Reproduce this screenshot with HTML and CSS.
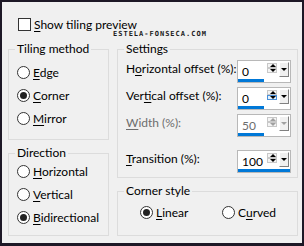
FILE: index.html
```html
<!DOCTYPE html>
<html lang="en">
<head>
    <meta charset="UTF-8">
    <title>Tiling</title>
    <link rel="stylesheet" href="styles.css">
</head>
<body>

<div class="dialog">
    <!-- Preview toggle -->
    <label class="check"><span class="box"></span><span><u>S</u>how tiling preview</span></label>
    <div class="watermark">ESTELA-FONSECA.COM</div>

    <div class="panes">
        <div class="col">
            <fieldset class="group tiling">
                <legend>Tiling method</legend>
                <div class="options">
                    <div class="radio"><span class="circle"></span><span><u>E</u>dge</span></div>
                    <div class="radio"><span class="circle on"></span><span><u>C</u>orner</span></div>
                    <div class="radio"><span class="circle"></span><span><u>M</u>irror</span></div>
                </div>
            </fieldset>

            <fieldset class="group direction">
                <legend>Direction</legend>
                <div class="options">
                    <div class="radio"><span class="circle"></span><span><u>H</u>orizontal</span></div>
                    <div class="radio"><span class="circle"></span><span><u>V</u>ertical</span></div>
                    <div class="radio"><span class="circle on"></span><span><u>B</u>idirectional</span></div>
                </div>
            </fieldset>
        </div>

        <div class="col">
            <fieldset class="group settings">
                <legend>Settings</legend>
                <div class="field">
                    <span class="label">H<u>o</u>rizontal offset (%):</span>
                    <div class="spin"><span class="value">0</span><span class="arrows"><i class="up"></i><i class="down"></i></span><span class="drop"></span><span class="bar" style="width: 50%"></span></div>
                </div>
                <div class="field">
                    <span class="label">Ver<u>t</u>ical offset (%):</span>
                    <div class="spin"><span class="value">0</span><span class="arrows"><i class="up"></i><i class="down hover"></i></span><span class="drop"></span><span class="bar" style="width: 50%"></span></div>
                </div>
                <div class="field disabled">
                    <span class="label"><u>W</u>idth (%):</span>
                    <div class="spin"><span class="value">50</span><span class="arrows"><i class="up"></i><i class="down"></i></span><span class="drop"></span><span class="bar" style="width: 50%"></span></div>
                </div>
                <div class="field transition">
                    <span class="label"><u>T</u>ransition (%):</span>
                    <div class="spin"><span class="value">100</span><span class="arrows"><i class="up"></i><i class="down"></i></span><span class="drop"></span><span class="bar" style="width: 100%"></span></div>
                </div>
            </fieldset>

            <fieldset class="group corner">
                <legend>Corner style</legend>
                <div class="inline">
                    <div class="radio"><span class="circle on"></span><span><u>L</u>inear</span></div>
                    <div class="radio"><span class="circle"></span><span>C<u>u</u>rved</span></div>
                </div>
            </fieldset>
        </div>
    </div>
</div>

</body>
</html>
```

FILE: styles.css
```css
/* Global */
* {
    box-sizing: border-box;
}

body {
    margin: 0;
    font-family: Lato, "Open Sans", sans-serif;
    font-size: 12px;
    color: #000;
}

u {
    text-decoration-thickness: 1px;
    text-underline-offset: 2px;
}

/* Window */
.dialog {
    position: relative;
    width: 304px;
    height: 246px;
    background: #f0f0f0;
    border: 2px solid #1d1826;
    border-bottom-width: 3px;
    padding: 14px 5px 0 6px;
}

.check {
    display: flex;
    align-items: center;
    gap: 3px;
    height: 16px;
    margin-left: 10px;
    white-space: nowrap;
}

.box {
    width: 13px;
    height: 13px;
    border: 1px solid #333;
    background: #fff;
}

.watermark {
    position: absolute;
    left: 111px;
    top: 28px;
    font-family: "DejaVu Sans Mono", monospace;
    font-size: 7px;
    font-weight: bold;
    letter-spacing: 1px;
    line-height: 8px;
    color: #1a1a1a;
}

/* Layout */
.panes {
    display: grid;
    grid-template-columns: 101px 181px;
    column-gap: 8px;
    margin-top: 9px;
}

.col {
    display: flex;
    flex-direction: column;
    gap: 5px;
}

.group {
    margin: 0;
    min-width: 0;
    padding: 0 8px;
    border: 1px solid #dcdcdc;
}

.group legend {
    padding: 0 2px;
    margin-left: -2px;
    line-height: 16px;
}

.tiling {
    height: 99px;
}

.direction {
    height: 91px;
}

.settings {
    height: 137px;
}

.corner {
    height: 53px;
}

/* Radio buttons */
.options {
    display: flex;
    flex-direction: column;
}

.tiling .options {
    margin-top: 4px;
}

.direction .options {
    margin-top: -1px;
}

.radio {
    display: flex;
    align-items: center;
    gap: 3px;
    height: 23px;
    white-space: nowrap;
}

.circle {
    position: relative;
    width: 13px;
    height: 13px;
    border: 1px solid #333;
    border-radius: 50%;
    background: #fff;
}

.circle.on::after {
    content: "";
    position: absolute;
    left: 2px;
    top: 2px;
    width: 7px;
    height: 7px;
    border-radius: 50%;
    background: #222;
}

.inline {
    display: grid;
    grid-template-columns: 82px auto;
    margin: 2px 0 0 14px;
}

/* Numeric fields */
.field {
    display: grid;
    grid-template-columns: 111px 54px;
    align-items: start;
    margin-top: 4px;
    height: 23px;
}

.settings legend + .field {
    margin-top: 3px;
}

.field.transition {
    margin-top: 13px;
}

.label {
    line-height: 16px;
    margin-top: 1px;
    white-space: nowrap;
}

.disabled .label,
.disabled .value {
    color: #6d6d6d;
}

.spin {
    position: relative;
    height: 23px;
    border: 1px solid #b8b8b8;
    background: #fff;
}

.value {
    position: absolute;
    left: 4px;
    top: 3px;
    line-height: 16px;
}

.arrows {
    position: absolute;
    left: 29px;
    top: 2px;
    display: flex;
    flex-direction: column;
}

.arrows i {
    position: relative;
    width: 10px;
    height: 5px;
    border: 1px solid #c8c8c8;
    background: #f4f4f4;
}

.arrows .hover {
    border-color: #4a90d9;
    background: #e5f1fb;
}

.arrows .up::after,
.arrows .down::after {
    content: "";
    position: absolute;
    left: 2px;
    border-left: 3px solid transparent;
    border-right: 3px solid transparent;
}

.arrows .up::after {
    top: 0;
    border-bottom: 3px solid #000;
}

.arrows .down::after {
    top: 0;
    border-top: 3px solid #000;
}

.drop {
    position: absolute;
    left: 41px;
    top: 1px;
    width: 10px;
    height: 15px;
    background: #f0f0f0;
    border-top: 1px solid #fff;
    border-left: 1px solid #fff;
    border-right: 1px solid #808080;
    border-bottom: 1px solid #808080;
}

.drop::after {
    content: "";
    position: absolute;
    left: 1px;
    top: 5px;
    border-left: 3px solid transparent;
    border-right: 3px solid transparent;
    border-top: 3px solid #000;
}

.disabled .arrows .up::after {
    border-bottom-color: #a0a0a0;
}

.disabled .arrows .down::after,
.disabled .drop::after {
    border-top-color: #a0a0a0;
}

.bar {
    position: absolute;
    left: 0;
    bottom: 0;
    height: 3px;
    background: #0078d7;
}
```
